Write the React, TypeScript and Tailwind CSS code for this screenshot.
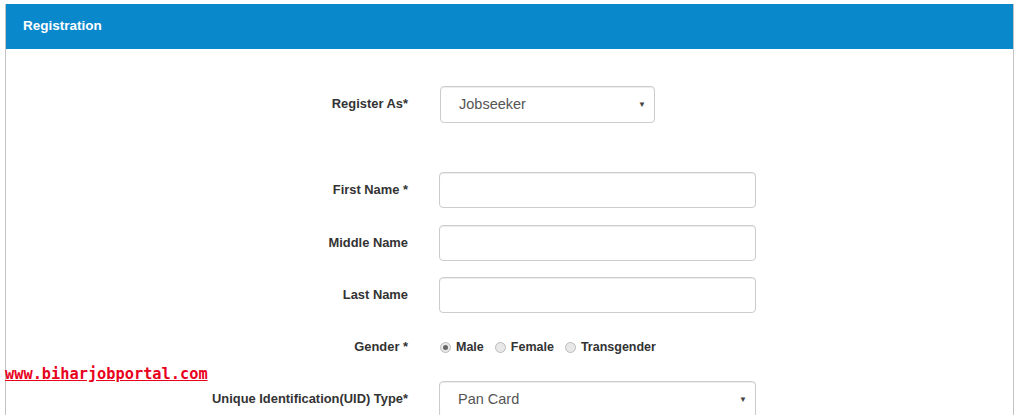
import React from 'react';

const labelCls = 'w-[402px] text-right text-[12.9px] font-bold text-[#333] leading-none';

const Row: React.FC<{ label: string; className?: string; children: React.ReactNode }> = ({ label, className, children }) => (
  <div className={`flex items-center ${className ?? ''}`}>
    <div className={labelCls}>{label}</div>
    <div className="ml-[31px]">{children}</div>
  </div>
);

const TextInput: React.FC = () => (
  <div className="w-[317px] h-[36px] border border-[#ccc] rounded-[4px] bg-white shadow-[inset_0_1px_1px_rgba(0,0,0,0.075)]" />
);

const SelectBox: React.FC<{ value: string; width: string }> = ({ value, width }) => (
  <div className={`${width} h-[37px] border border-[#ccc] rounded-[4px] bg-white flex items-center justify-between pl-[18px] pr-[8px] shadow-[inset_0_1px_1px_rgba(0,0,0,0.075)]`}>
    <span className="text-[14.5px] text-[#555]">{value}</span>
    <span className="text-[8px] text-[#444]">▼</span>
  </div>
);

const Radio: React.FC<{ label: string; checked?: boolean }> = ({ label, checked }) => (
  <label className="flex items-center mr-[11px]">
    <span className="w-[11px] h-[11px] rounded-full border border-[#bbb] bg-[#e8e8e8] flex items-center justify-center">
      {checked && <span className="w-[5px] h-[5px] rounded-full bg-[#666]" />}
    </span>
    <span className="ml-[5px] text-[12.5px] font-bold text-[#333]">{label}</span>
  </label>
);

export default function App() {
  return (
    <div className="relative w-[1024px] h-[415px] overflow-hidden bg-white" style={{ fontFamily: '"Liberation Sans", Arial, sans-serif' }}>
      <div className="ml-[5px] mt-[4px] w-[1009px] border-x border-[#c4c4c4]">
        <div className="h-[45px] bg-[#0a88cc] flex items-center pl-[17px]">
          <h2 className="text-[13.5px] font-bold text-white">Registration</h2>
        </div>
        <div className="pt-[37px] pb-10">
          <Row label="Register As*">
            <div className="ml-[1px]">
              <SelectBox value="Jobseeker" width="w-[215px]" />
            </div>
          </Row>
          <Row label="First Name *" className="mt-[49px]">
            <TextInput />
          </Row>
          <Row label="Middle Name" className="mt-[17px]">
            <TextInput />
          </Row>
          <Row label="Last Name" className="mt-[16px]">
            <TextInput />
          </Row>
          <Row label="Gender *" className="mt-[26px]">
            <div className="flex items-center h-[16px] ml-[1px]">
              <Radio label="Male" checked />
              <Radio label="Female" />
              <Radio label="Transgender" />
            </div>
          </Row>
          <Row label="Unique Identification(UID) Type*" className="mt-[26px]">
            <SelectBox value="Pan Card" width="w-[317px]" />
          </Row>
        </div>
      </div>
      <a
        className="absolute left-[5px] top-[363px] text-[15.3px] font-bold text-[#e8001c] underline"
        style={{ fontFamily: '"DejaVu Sans Mono", monospace' }}
      >
        www.biharjobportal.com
      </a>
    </div>
  );
}
